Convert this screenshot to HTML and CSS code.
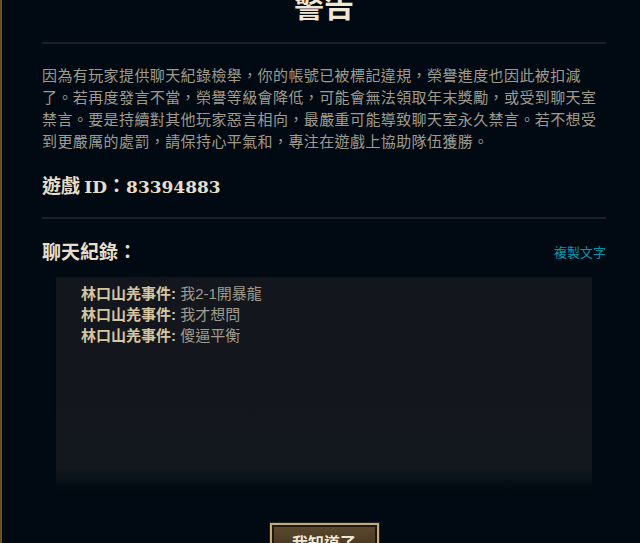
FILE: index.html
```html
<!DOCTYPE html>
<html>
<head>
<meta charset="utf-8" />
<title>警告</title>
<link rel="stylesheet" href="styles.css">
</head>
<body>

<div class="frame">
  <h1 class="title">警告</h1>
  <div class="rule"></div>

  <p class="notice">因為有玩家提供聊天紀錄檢舉，你的帳號已被標記違規，榮譽進度也因此被扣減<br>了。若再度發言不當，榮譽等級會降低，可能會無法領取年末獎勵，或受到聊天室<br>禁言。要是持續對其他玩家惡言相向，最嚴重可能導致聊天室永久禁言。若不想受<br>到更嚴厲的處罰，請保持心平氣和，專注在遊戲上協助隊伍獲勝。</p>

  <h2 class="gameId">遊戲 <span class="latin">ID</span>：<span class="latin">83394883</span></h2>
  <div class="rule"></div>

  <div class="logHead">
    <h2 class="logTitle">聊天紀錄：</h2>
    <a class="copy" href="#">複製文字</a>
  </div>

  <div class="chatLog">
    <div class="line"><span class="who">林口山羌事件:</span> 我2-1開暴龍</div>
    <div class="line"><span class="who">林口山羌事件:</span> 我才想問</div>
    <div class="line"><span class="who">林口山羌事件:</span> 傻逼平衡</div>
  </div>

  <div class="actions">
    <button type="button" class="ok">我知道了</button>
  </div>
</div>

</body>
</html>
```

FILE: styles.css
```css
body
{
    margin: 0;
    background-color: #010a13;
    overflow: hidden;
}

.frame
{
    display: flow-root;
    border-left: 2px solid #6a5226;
    padding: 0 34px 0 40px;
    height: 543px;
    font-family: "Noto Sans CJK TC", sans-serif;
}

.title
{
    margin: -17px 0 0 0;
    height: 59px;
    font-size: 30px;
    line-height: 42px;
    text-align: center;
    color: #f0e6d2;
    font-weight: 700;
}

.rule
{
    height: 2px;
    background-color: #1b2026;
}

.notice
{
    margin: 20px 0 0 0;
    font-size: 15px;
    line-height: 22px;
    letter-spacing: 0.4px;
    color: #a09b8c;
}

.gameId
{
    margin: 21px 0 18px 0;
    font-size: 19px;
    line-height: 24px;
    color: #e8dfca;
}

.latin
{
    font-family: "DejaVu Serif", serif;
    font-size: 17px;
}

.logHead
{
    display: flex;
    justify-content: space-between;
    align-items: center;
    margin-top: 20px;
    height: 24px;
}

.logTitle
{
    margin: 0;
    font-size: 19px;
    line-height: 24px;
    color: #e8dfca;
}

.copy
{
    font-size: 13px;
    color: #0596aa;
    text-decoration: none;
}

.chatLog
{
    margin: 14px 14px 0 14px;
    height: 213px;
    padding: 6px 25px 0 25px;
    box-sizing: border-box;
    background: linear-gradient(to bottom, #13171d 0%, #13181e 90%, #010a13 100%);
    font-family: "Liberation Sans", "Noto Sans CJK TC", sans-serif;
    font-size: 15px;
    line-height: 21px;
    color: #a09b8c;
}

.who
{
    color: #d6c6a0;
    font-weight: 700;
}

.actions
{
    display: flex;
    justify-content: center;
    margin-top: 33px;
}

.ok
{
    width: 109px;
    height: 38px;
    border: 2px solid #c8aa6e;
    outline: 1px solid #1e2328;
    box-shadow: inset 0 0 0 2px #1e1810;
    background: linear-gradient(to bottom, #5b4a2e, #3c2e1c);
    color: #f0e6d2;
    font-family: "Noto Sans CJK TC", sans-serif;
    font-size: 16px;
    font-weight: 700;
    padding: 0;
}
```
